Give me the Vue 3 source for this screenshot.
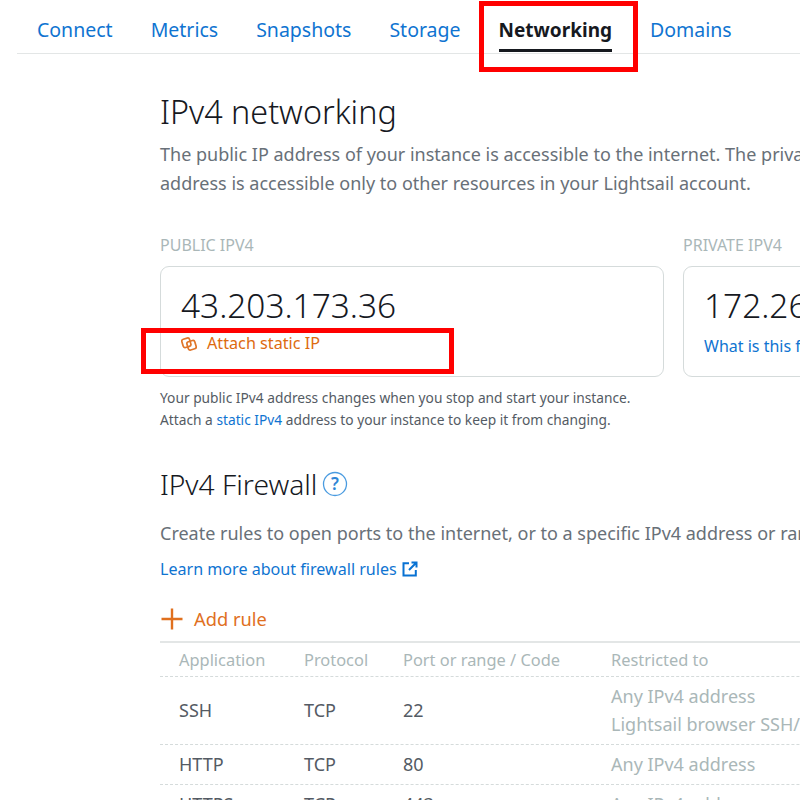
<script setup>
const tabs = [
  { name: 'Connect' },
  { name: 'Metrics' },
  { name: 'Snapshots' },
  { name: 'Storage' },
  { name: 'Networking', active: true },
  { name: 'Domains' }
]
const head = ['Application', 'Protocol', 'Port or range / Code', 'Restricted to']
const rows = [
  { app: 'SSH', proto: 'TCP', port: '22', to: ['Any IPv4 address', 'Lightsail browser SSH/RDP'] },
  { app: 'HTTP', proto: 'TCP', port: '80', to: ['Any IPv4 address'] },
  { app: 'HTTPS', proto: 'TCP', port: '443', to: ['Any IPv4 address'] }
]
</script>

<template>
  <div class="page">
    <nav class="tabs">
      <a v-for="t in tabs" :key="t.name" class="tab" :class="{ active: t.active }">{{ t.name }}</a>
    </nav>
    <main class="content">
      <h1 class="title">IPv4 networking</h1>
      <p class="lead">The public IP address of your instance is accessible to the internet. The private IP<br>address is accessible only to other resources in your Lightsail account.</p>
      <div class="cards">
        <section class="col-public">
          <div class="label">PUBLIC IPV4</div>
          <div class="card">
            <div class="ip">43.203.173.36</div>
            <div class="attach">
              <svg class="chain" width="16" height="16" viewBox="0 0 16 16" fill="none" stroke="#e0762a" stroke-width="1.700">
                <g transform="rotate(-16 8 8)">
                  <rect x="1.800" y="1.800" width="8" height="8.600" rx="2" />
                  <path d="M9.800 5.600h2.400a2 2 0 0 1 2 2v4.600a2 2 0 0 1-2 2H8a2 2 0 0 1-2-2v-1.800" />
                  <path d="M6 10.400V7.600a2 2 0 0 1 2-2h1.800" />
                </g>
              </svg>
              <span>Attach static IP</span>
            </div>
          </div>
        </section>
        <section class="col-private">
          <div class="label">PRIVATE IPV4</div>
          <div class="card">
            <div class="ip">172.26.10.20</div>
            <div class="what">What is this for?</div>
          </div>
        </section>
      </div>
      <p class="note">Your public IPv4 address changes when you stop and start your instance.<br>Attach a <a class="link">static IPv4</a> address to your instance to keep it from changing.</p>
      <h2 class="fw-title">
        <span>IPv4 Firewall</span>
        <svg width="26" height="26" viewBox="0 0 26 26">
          <circle cx="13" cy="13" r="11.500" fill="none" stroke="#4a9be0" stroke-width="1.300" />
          <text x="13" y="19" text-anchor="middle" class="q">?</text>
        </svg>
      </h2>
      <p class="fw-lead">Create rules to open ports to the internet, or to a specific IPv4 address or range.</p>
      <a class="learn">
        <span>Learn more about firewall rules</span>
        <svg width="16" height="16" viewBox="0 0 16 16" fill="none" stroke="#0972d3" stroke-width="2">
          <path d="M7 2.200H1.500v12.300h12.300V9" />
          <path d="M9.500 1.500h5v5M14.200 1.800 7 9" />
        </svg>
      </a>
      <div class="add">
        <svg width="24" height="24" viewBox="0 0 24 24" stroke="#e0701e" stroke-width="2.400">
          <path d="M12 1.500v21M1.500 12h21" />
        </svg>
        <span>Add rule</span>
      </div>
      <div class="table">
        <div class="row head">
          <div v-for="h in head" :key="h" class="cell">{{ h }}</div>
        </div>
        <div v-for="r in rows" :key="r.app" class="row body">
          <div class="cell">{{ r.app }}</div>
          <div class="cell">{{ r.proto }}</div>
          <div class="cell">{{ r.port }}</div>
          <div class="cell muted"><div v-for="x in r.to" :key="x" class="line">{{ x }}</div></div>
        </div>
      </div>
    </main>
    <div class="mark mark-tab"></div>
    <div class="mark mark-attach"></div>
  </div>
</template>

<style>
html, body { margin: 0; background: #fff; }
</style>

<style scoped>
.page {
  position: relative;
  width: 800px;
  height: 800px;
  overflow: hidden;
  background: #fff;
  font-family: "Noto Sans", "Open Sans", sans-serif;
  color: #16191f;
  white-space: nowrap;
}
.tabs {
  display: flex;
  gap: 38px;
  height: 53px;
  margin-left: 17px;
  padding-left: 20px;
  border-bottom: 1px solid #e3e6e6;
}
.tab {
  font-size: 19.500px;
  line-height: 60px;
  height: 53px;
  color: #0f74d1;
  box-sizing: border-box;
}
.tab.active {
  font-size: 19px;
  font-weight: 700;
  color: #16191f;
  border-bottom: 3px solid #16191f;
  height: 52px;
}
.content { padding: 36px 0 0 160px; }
.title {
  margin: 0;
  font-size: 32.300px;
  line-height: 42px;
  font-weight: 300;
}
.lead {
  margin: 8px 0 0;
  font-size: 18px;
  line-height: 29px;
  color: #687078;
}
.cards { display: flex; gap: 19px; margin-top: 37px; }
.col-public { width: 504px; flex: none; }
.col-private { width: 400px; flex: none; }
.label {
  font-size: 16px;
  line-height: 20px;
  color: #aab7b8;
}
.card {
  margin-top: 11px;
  height: 111px;
  box-sizing: border-box;
  border: 1px solid #d5dbdb;
  border-radius: 9px;
  padding: 16px 0 0 20px;
}
.ip { font-size: 33.400px; line-height: 44px; font-weight: 300; color: #16191f; }
.attach {
  display: flex;
  align-items: center;
  gap: 10px;
  margin-top: 6px;
  font-size: 16.200px;
  line-height: 20px;
  color: #dd6b10;
}
.chain { position: relative; top: 1px; }
.what {
  font-size: 16px;
  line-height: 20px;
  margin-top: 9px;
  color: #0f74d1;
}
.note {
  margin: 9.500px 0 0;
  font-size: 13.750px;
  line-height: 22.500px;
  color: #545b64;
}
.link { color: #0f74d1; }
.fw-title {
  display: flex;
  align-items: center;
  gap: 5px;
  margin: 34px 0 0;
  font-size: 28.200px;
  line-height: 36px;
  font-weight: 300;
}
.q { font-size: 17px; fill: #2f86d6; font-weight: 600; }
.fw-lead {
  margin: 18px 0 0;
  font-size: 18px;
  line-height: 26px;
  color: #687078;
}
.learn {
  display: flex;
  align-items: center;
  gap: 5px;
  margin-top: 11px;
  font-size: 16.100px;
  line-height: 24px;
  color: #0f74d1;
}
.add {
  display: flex;
  align-items: center;
  gap: 10px;
  margin-top: 25px;
  font-size: 18.300px;
  line-height: 26px;
  color: #e0701e;
}
.table {
  margin-top: 9px;
  width: 900px;
  border-top: 2px solid #e3e6e6;
}
.row {
  display: grid;
  grid-template-columns: 125px 99px 208px 1fr;
  align-items: center;
  padding-left: 19px;
  border-bottom: 1px dashed #d5dbdb;
}
.head { height: 33px; font-size: 16.400px; color: #aab7b8; }
.body { font-size: 18px; color: #545b64; }
.body .cell { padding: 5.500px 0; }
.line { line-height: 28px; }
.muted { color: #aab7b8; }
.mark {
  position: absolute;
  box-sizing: border-box;
  border: 5px solid #ff0000;
  pointer-events: none;
}
.mark-tab { left: 479px; top: 1px; width: 159px; height: 71px; }
.mark-attach { left: 141px; top: 328px; width: 313px; height: 46px; }
</style>
